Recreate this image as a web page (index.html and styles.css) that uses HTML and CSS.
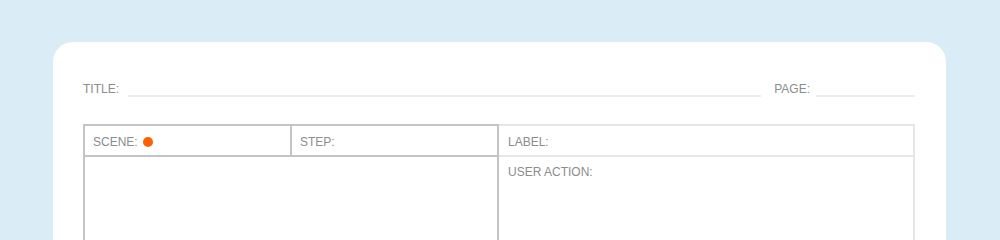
FILE: index.html
```html
<!DOCTYPE html>
<html>
<head>
<meta charset="utf-8">
<link rel="stylesheet" href="styles.css">
</head>
<body>
<div class="card">
  <div class="head-row">
    <span class="label">TITLE:</span>
    <div class="line line-title"></div>
    <span class="label label-page">PAGE:</span>
    <div class="line line-page"></div>
  </div>
  <div class="sheet">
    <div class="frame">
      <div class="row-top">
        <div class="cell cell-scene"><span class="label">SCENE:</span><span class="dot"></span></div>
        <div class="cell cell-step"><span class="label">STEP:</span></div>
      </div>
      <div class="canvas"></div>
    </div>
    <div class="notes">
      <div class="row-top">
        <div class="cell"><span class="label">LABEL:</span></div>
      </div>
      <div class="note-body"><span class="label">USER ACTION:</span></div>
    </div>
  </div>
</div>
</body>
</html>
```
FILE: styles.css
```css
html, body {
  margin: 0;
  padding: 0;
  background: #daedf7;
  font-family: "Liberation Sans", Arial, sans-serif;
}
.card {
  margin: 42px 54px 0 53px;
  background: #ffffff;
  border-radius: 20px;
  padding: 39px 31px 40px 30px;
  height: 400px;
}
.label {
  font-size: 12px;
  color: #8c8c8c;
  line-height: 14px;
  white-space: nowrap;
}
.head-row {
  display: flex;
  align-items: flex-end;
  height: 15px;
}
.line {
  height: 2px;
  background: #ececec;
  margin-bottom: -1px;
}
.line-title {
  flex: 1;
  margin-left: 9px;
}
.label-page {
  margin-left: 13px;
}
.line-page {
  width: 99px;
  margin-left: 6px;
}
.sheet {
  margin-top: 28px;
  display: grid;
  grid-template-columns: 416px 1fr;
}
.frame {
  border: 2px solid #c4c4c4;
  position: relative;
  z-index: 1;
}
.notes {
  border: 2px solid #e6e6e6;
  margin-left: -2px;
}
.row-top {
  display: flex;
  height: 29px;
}
.frame .row-top {
  border-bottom: 2px solid #c4c4c4;
}
.notes .row-top {
  border-bottom: 2px solid #e6e6e6;
}
.cell {
  flex: 1;
  display: flex;
  align-items: center;
  padding: 2px 8px 0 8px;
}
.cell-step {
  border-left: 2px solid #c4c4c4;
}
.notes .cell {
  padding-left: 9px;
}
.dot {
  width: 10px;
  height: 10px;
  border-radius: 50%;
  background: #ff6100;
  margin-left: 5px;
}
.canvas {
  height: 220px;
}
.note-body {
  padding: 5px 9px;
  height: 204px;
}
```
